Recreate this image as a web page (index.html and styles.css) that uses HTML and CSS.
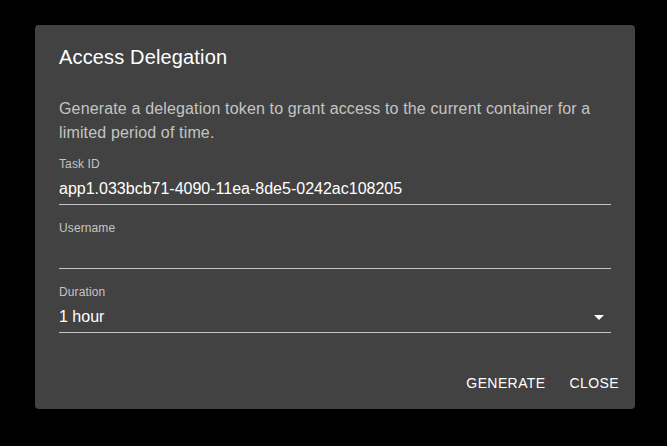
FILE: index.html
```html
<!DOCTYPE html>
<html>
<head>
<meta charset="utf-8">
<link rel="stylesheet" href="styles.css">
</head>
<body>
<div class="backdrop">
  <div class="dialog">
    <h2 class="title">Access Delegation</h2>
    <div class="content">
      <p class="desc">Generate a delegation token to grant access to the current container for a limited period of time.</p>
      <div class="field">
        <label class="label">Task ID</label>
        <div class="input">app1.033bcb71-4090-11ea-8de5-0242ac108205</div>
      </div>
      <div class="field">
        <label class="label">Username</label>
        <div class="input"></div>
      </div>
      <div class="field">
        <label class="label">Duration</label>
        <div class="input select">1 hour
          <svg class="arrow" viewBox="0 0 24 24" width="24" height="24"><path d="M7 10l5 5 5-5z" fill="#fff"/></svg>
        </div>
      </div>
    </div>
    <div class="actions">
      <button class="btn">Generate</button>
      <button class="btn">Close</button>
    </div>
  </div>
</div>
</body>
</html>
```
FILE: styles.css
```css
html, body {
  margin: 0;
  padding: 0;
  background: #000;
  font-family: "Liberation Sans", Arial, sans-serif;
}
.backdrop {
  width: 667px;
  height: 446px;
  display: flex;
  align-items: flex-start;
  justify-content: flex-start;
  padding: 25px 0 0 35px;
  box-sizing: border-box;
}
.dialog {
  width: 600px;
  height: 384px;
  background: #424242;
  border-radius: 4px;
  color: #fff;
  display: flex;
  flex-direction: column;
  box-sizing: border-box;
}
.title {
  margin: 0;
  padding: 16px 24px;
  font-size: 20px;
  font-weight: 400;
  line-height: 32px;
  letter-spacing: 0.15px;
}
.content {
  padding: 8px 24px 8px;
  flex: 1;
}
.desc {
  margin: 0 0 12px;
  font-size: 16px;
  line-height: 24px;
  letter-spacing: 0.15px;
  color: rgba(255,255,255,0.7);
}
.field {
  height: 48px;
  margin-bottom: 16px;
  display: flex;
  flex-direction: column;
}
.label {
  height: 16px;
  box-sizing: border-box;
  padding-top: 1px;
  font-size: 12px;
  line-height: 13px;
  letter-spacing: 0.11px;
  color: rgba(255,255,255,0.7);
}
.input {
  position: relative;
  height: 32px;
  box-sizing: border-box;
  padding: 6px 0 7px;
  font-size: 16px;
  line-height: 19px;
  color: #fff;
  border-bottom: 1px solid rgba(255,255,255,0.7);
}
.arrow {
  position: absolute;
  right: 0;
  top: 4px;
}
.actions {
  display: flex;
  justify-content: flex-end;
  gap: 8px;
  padding: 8px;
}
.btn {
  background: none;
  border: none;
  color: #fff;
  font-family: "Liberation Sans", Arial, sans-serif;
  font-size: 14px;
  font-weight: 400;
  text-transform: uppercase;
  letter-spacing: 0.4px;
  padding: 6px 8px;
  min-width: 64px;
  height: 36px;
  line-height: 24px;
  border-radius: 4px;
}
```
